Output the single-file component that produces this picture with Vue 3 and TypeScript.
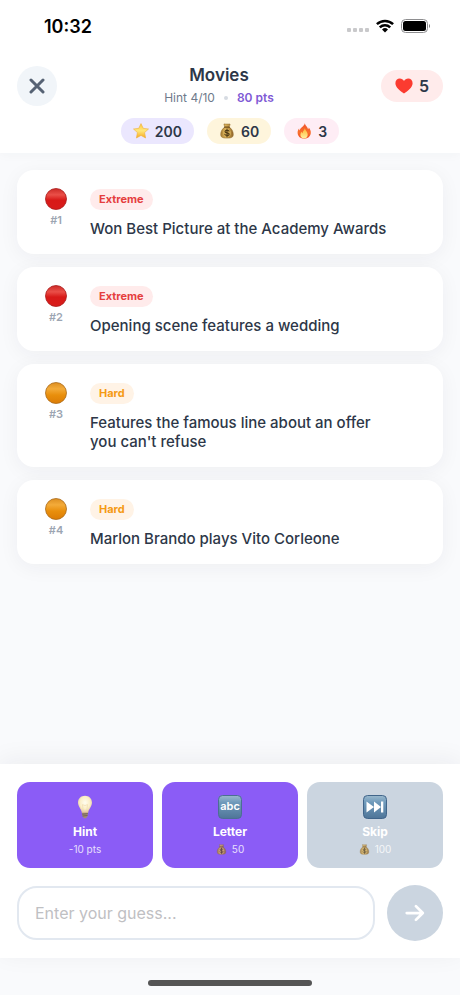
<script setup lang="ts">
import { computed, ref } from 'vue'

interface Hint {
  level: 'Extreme' | 'Hard'
  text: string
}

interface Stat {
  icon: string
  value: number
  tone: string
  label: string
}

interface Action {
  icon: string
  label: string
  cost: string
  coins: boolean
  disabled: boolean
}

const hints: Hint[] = [
  { level: 'Extreme', text: 'Won Best Picture at the Academy Awards' },
  { level: 'Extreme', text: 'Opening scene features a wedding' },
  { level: 'Hard', text: "Features the famous line about an offer you can't refuse" },
  { level: 'Hard', text: 'Marlon Brando plays Vito Corleone' },
]

const stats: Stat[] = [
  { icon: 'star', value: 200, tone: 'violet', label: 'Score' },
  { icon: 'bag', value: 60, tone: 'yellow', label: 'Coins' },
  { icon: 'fire', value: 3, tone: 'pink', label: 'Streak' },
]

const actions: Action[] = [
  { icon: 'bulb', label: 'Hint', cost: '-10 pts', coins: false, disabled: false },
  { icon: 'abc', label: 'Letter', cost: '50', coins: true, disabled: false },
  { icon: 'next', label: 'Skip', cost: '100', coins: true, disabled: true },
]

const guess = ref('')
const canSend = computed(() => guess.value.trim().length > 0)
</script>

<template>
  <div class="screen">
    <svg class="sprite" width="0" height="0" aria-hidden="true">
      <defs>
        <linearGradient id="g-star" x1="0" y1="0" x2="0" y2="1">
          <stop offset="0" stop-color="#ffc93c" />
          <stop offset="0.5" stop-color="#ffe77a" />
          <stop offset="1" stop-color="#f8a91f" />
        </linearGradient>
        <linearGradient id="g-red" x1="0" y1="0" x2="0" y2="1">
          <stop offset="0" stop-color="#cc2a26" />
          <stop offset="0.3" stop-color="#ea4f48" />
          <stop offset="0.55" stop-color="#d81a18" />
          <stop offset="1" stop-color="#d81c1b" />
        </linearGradient>
        <linearGradient id="g-orange" x1="0" y1="0" x2="0" y2="1">
          <stop offset="0" stop-color="#dd8e20" />
          <stop offset="0.3" stop-color="#f3ab3a" />
          <stop offset="0.6" stop-color="#e98f0c" />
          <stop offset="1" stop-color="#dc7c05" />
        </linearGradient>
        <linearGradient id="g-bag" x1="0" y1="0" x2="1" y2="0">
          <stop offset="0" stop-color="#a97e34" />
          <stop offset="0.4" stop-color="#d9b25c" />
          <stop offset="1" stop-color="#94692a" />
        </linearGradient>
        <linearGradient id="g-fire" x1="0" y1="0" x2="0" y2="1">
          <stop offset="0" stop-color="#f0512b" />
          <stop offset="0.6" stop-color="#f9702b" />
          <stop offset="1" stop-color="#ee4d24" />
        </linearGradient>
        <linearGradient id="g-flame" x1="0" y1="0" x2="0" y2="1">
          <stop offset="0" stop-color="#ffb52e" />
          <stop offset="1" stop-color="#fff0a0" />
        </linearGradient>
        <radialGradient id="g-bulb" cx="0.5" cy="0.4" r="0.6">
          <stop offset="0" stop-color="#fffdf0" />
          <stop offset="0.6" stop-color="#fbeec6" />
          <stop offset="1" stop-color="#dcbf9c" />
        </radialGradient>
        <linearGradient id="g-tile" x1="0" y1="0" x2="0" y2="1">
          <stop offset="0" stop-color="#9bb9cd" />
          <stop offset="0.3" stop-color="#6f9abb" />
          <stop offset="1" stop-color="#4f7598" />
        </linearGradient>
      </defs>
      <symbol id="star" viewBox="0 0 16 16">
        <path d="M8 .6l2.200 4.700 5.300.7-3.900 3.600 1 5.400L8 12.400 3.400 15l1-5.400L.5 6l5.300-.7z" fill="url(#g-star)" stroke="#efb040" stroke-width=".6" stroke-linejoin="round" />
      </symbol>
      <symbol id="bag" viewBox="0 0 16 16">
        <path d="M5 .9c1 .5 1.600-.2 3 .2 1.300-.4 2 .3 3-.1.4 1-.7 2-1 3.100 2.900 1.400 4.300 4.600 4.300 7.400 0 2.500-1.400 3.600-6.300 3.600s-6.300-1.100-6.300-3.600c0-2.800 1.400-6 4.300-7.400C5.700 3 4.700 1.900 5 .9z" fill="url(#g-bag)" stroke="#8a6429" stroke-width=".5" />
        <path d="M5.600 4.200h4.800" stroke="#6e4c1b" stroke-width="1.200" stroke-linecap="round" />
        <circle cx="8" cy="9.800" r="3.900" fill="#d5ad57" />
        <path d="M10 8.100C9.600 7.400 8.900 7.200 8 7.200c-1.200 0-2 .5-2 1.300 0 1.900 4.200.8 4.200 2.700 0 .8-.9 1.300-2.200 1.300-1.100 0-1.900-.4-2.200-1.100M8 6v7.700" fill="none" stroke="#4b3714" stroke-width="1.100" stroke-linecap="round" />
      </symbol>
      <symbol id="fire" viewBox="0 0 16 16">
        <path d="M8.800.3c.4 2.700 3 3.500 3.300 6 .5-.4.700-1 .600-1.700 1.500 1.700 2.300 3.500 2.100 5.400-.3 3.500-3 5.700-6.500 5.700-3.700 0-6.500-2.200-6.700-5.700-.1-1.800.4-3.200 1.500-4.600 0 .9.200 1.500.8 2C3.900 4.300 8.300 3.700 8.800.3z" fill="url(#g-fire)" />
        <path d="M8.800 5c.1 2 2.900 3.600 2.900 6.700 0 2.300-1.500 3.700-3.600 3.700s-3.700-1.400-3.700-3.500c0-1.500.8-2.500 1.300-3.200.1.900.4 1.300.9 1.600C6.500 8 8.600 7.400 8.800 5z" fill="url(#g-flame)" />
      </symbol>
      <symbol id="heart" viewBox="0 0 18 16">
        <path d="M9 15.600C5.300 13.100.4 9.600.4 5.300.4 2.600 2.300.6 4.800.6 6.600.6 8.200 1.500 9 3 9.800 1.500 11.400.6 13.200.6c2.500 0 4.400 2 4.400 4.700 0 4.300-4.900 7.800-8.600 10.300z" fill="#fb3b30" />
      </symbol>
      <symbol id="bulb" viewBox="0 0 24 24">
        <path d="M12 .8c4.200 0 7 2.900 7 6.800 0 4.100-3.300 6.300-3.900 10.400H8.900C8.300 13.900 5 11.700 5 7.600 5 3.700 7.800.8 12 .8z" fill="url(#g-bulb)" />
        <path d="M10.300 16.500L9.500 9.600l2.500 1 2.500-1-.8 6.900" fill="none" stroke="#efd9a8" stroke-width=".6" />
        <path d="M9 17.700h6l-.4 3.300-1.500 2.200h-2.200L9.400 21z" fill="#a28d77" />
        <path d="M9.200 19.200l5.600-.5M9.500 21l5-.5" stroke="#69594e" stroke-width=".8" />
      </symbol>
      <symbol id="tile" viewBox="0 0 24 24">
        <rect x=".5" y=".5" width="23" height="23" rx="4" fill="url(#g-tile)" stroke="#4b6f93" />
      </symbol>
      <symbol id="next" viewBox="0 0 24 24">
        <rect x=".5" y=".5" width="23" height="23" rx="4" fill="url(#g-tile)" stroke="#41658a" />
        <path d="M3.500 6.500l7.500 5.500-7.500 5.500zM11 6.500l7 5.500-7 5.500zM18 6.500h2.300v11H18z" fill="#fff" />
      </symbol>
      <symbol id="level-Extreme" viewBox="0 0 22 22">
        <circle cx="11" cy="11" r="10.500" fill="url(#g-red)" stroke="#a91c1c" stroke-width=".8" />
      </symbol>
      <symbol id="level-Hard" viewBox="0 0 22 22">
        <circle cx="11" cy="11" r="10.500" fill="url(#g-orange)" stroke="#a9691a" stroke-width=".8" />
      </symbol>
    </svg>

    <header class="header">
      <div class="status">
        <span class="clock">10:32</span>
        <div class="signals">
          <svg class="dots" viewBox="0 0 22 4" aria-hidden="true">
            <g fill="#c9c9cb"><rect width="4" height="4" rx="1" /><rect x="6" width="4" height="4" rx="1" /><rect x="12" width="4" height="4" rx="1" /><rect x="18" width="4" height="4" rx="1" /></g>
          </svg>
          <svg class="wifi" viewBox="0 0 18 14" aria-hidden="true">
            <g fill="none" stroke="#000" stroke-width="2.500">
              <path d="M.9 5.200a11.800 11.800 0 0 1 16.200 0" />
              <path d="M3.800 8.400a7.500 7.500 0 0 1 10.400 0" />
            </g>
            <path d="M9 13.600l-3-3.100a4.300 4.300 0 0 1 6 0z" />
          </svg>
          <svg class="battery" viewBox="0 0 30 14" aria-hidden="true">
            <rect x=".5" y=".5" width="26" height="13" rx="4" fill="none" stroke="#8e8e90" />
            <rect x="2" y="2" width="23" height="10" rx="2.500" />
            <path d="M28 5v4c1.300-.5 1.300-3.500 0-4z" fill="#777" />
          </svg>
        </div>
      </div>

      <div class="topbar">
        <button class="close" type="button" aria-label="Close">
          <svg viewBox="0 0 16 16" aria-hidden="true"><path d="M2 2l12 12M14 2L2 14" /></svg>
        </button>
        <div class="heading">
          <h1>Movies</h1>
          <p class="progress">
            <span>Hint 4/10</span>
            <i class="sep"></i>
            <strong>80 pts</strong>
          </p>
        </div>
        <div class="lives">
          <svg class="heart" aria-hidden="true"><use href="#heart" /></svg>
          <span>5</span>
        </div>
      </div>

      <ul class="stats">
        <li v-for="s in stats" :key="s.icon" class="stat" :class="s.tone" :aria-label="s.label">
          <svg class="stat-icon" aria-hidden="true"><use :href="'#' + s.icon" /></svg>
          <span>{{ s.value }}</span>
        </li>
      </ul>
    </header>

    <main class="hints">
      <article v-for="(h, i) in hints" :key="i" class="card">
        <div class="rank">
          <svg class="ball" aria-hidden="true"><use :href="'#level-' + h.level" /></svg>
          <span>#{{ i + 1 }}</span>
        </div>
        <div class="body">
          <span class="badge" :class="h.level.toLowerCase()">{{ h.level }}</span>
          <p class="text">{{ h.text }}</p>
        </div>
      </article>
    </main>

    <footer class="panel">
      <div class="actions">
        <button v-for="a in actions" :key="a.label" class="action" type="button" :disabled="a.disabled">
          <svg v-if="a.icon === 'abc'" class="action-icon" viewBox="0 0 24 24" aria-hidden="true">
            <use href="#tile" />
            <text class="abc" x="12" y="15" text-anchor="middle">abc</text>
          </svg>
          <svg v-else class="action-icon" aria-hidden="true"><use :href="'#' + a.icon" /></svg>
          <span class="action-label">{{ a.label }}</span>
          <span class="cost">
            <svg v-if="a.coins" class="coin" aria-hidden="true"><use href="#bag" /></svg>
            {{ a.cost }}
          </span>
        </button>
      </div>
      <form class="guess" @submit.prevent>
        <input v-model="guess" type="text" aria-label="Your guess" placeholder="Enter your guess..." />
        <button class="send" :class="{ ready: canSend }" type="submit" aria-label="Send guess">
          <svg viewBox="0 0 24 24" aria-hidden="true"><path d="M3 12h17M13 4.500l7.500 7.500-7.500 7.500" /></svg>
        </button>
      </form>
    </footer>
    <div class="home"><span></span></div>
  </div>
</template>

<style>
body {
  margin: 0;
  background: #f8fafc;
}
</style>

<style scoped>
* {
  box-sizing: border-box;
}

.screen {
  display: flex;
  flex-direction: column;
  min-height: 100vh;
  background: #f9fafc;
  color: #2d3748;
  font-family: Inter, "Liberation Sans", sans-serif;
}

.sprite {
  position: absolute;
}

svg {
  display: block;
  flex: none;
}

h1,
p,
ul {
  margin: 0;
  padding: 0;
}

button,
input {
  font: inherit;
}

button {
  display: flex;
  align-items: center;
  justify-content: center;
  padding: 0;
  border: 0;
}

.header {
  padding-bottom: 9px;
  background: #fff;
  box-shadow: 0 2px 10px rgba(45, 55, 72, 0.03);
}

.status {
  display: flex;
  align-items: center;
  justify-content: space-between;
  height: 54px;
  padding: 0 29px 2px 44px;
  color: #000;
}

.clock {
  font-size: 18px;
  font-weight: 600;
}

.signals {
  display: flex;
  align-items: center;
  gap: 7px;
}

.dots {
  width: 22px;
  height: 4px;
  margin-top: 8px;
}

.wifi {
  width: 18px;
  height: 14px;
}

.battery {
  width: 30px;
  height: 14px;
}

.topbar {
  display: flex;
  align-items: center;
  justify-content: space-between;
  height: 64px;
  padding: 0 17px;
}

.close {
  width: 40px;
  height: 40px;
  border-radius: 50%;
  background: #f1f5f9;
}

.close svg {
  width: 16px;
  height: 16px;
  fill: none;
  stroke: #566274;
  stroke-width: 3;
  stroke-linecap: round;
}

.heading {
  text-align: center;
}

h1 {
  font-size: 17px;
  font-weight: 600;
  line-height: 24px;
}

.progress {
  display: flex;
  align-items: center;
  justify-content: center;
  gap: 9px;
  color: #6f7a8b;
  font-size: 12px;
  line-height: 22px;
}

.progress strong {
  color: #805ad5;
  font-weight: 600;
}

.sep {
  width: 4px;
  height: 4px;
  border-radius: 50%;
  background: #d6dbe2;
}

.lives {
  display: flex;
  align-items: center;
  gap: 6px;
  height: 32px;
  padding: 0 14px;
  border-radius: 16px;
  background: #ffebeb;
  font-size: 16px;
  font-weight: 600;
}

.heart {
  width: 18px;
  height: 16px;
}

.stats {
  display: flex;
  justify-content: center;
  gap: 13px;
  list-style: none;
}

.stat {
  display: flex;
  align-items: center;
  gap: 6px;
  height: 26px;
  padding: 0 12px;
  border-radius: 13px;
  font-size: 14px;
  font-weight: 600;
}

.violet {
  background: #ebe7fe;
}

.yellow {
  background: #fef5dc;
}

.pink {
  background: #feedf5;
}

.stat-icon {
  width: 16px;
  height: 16px;
}

.hints {
  display: flex;
  flex: 1;
  flex-direction: column;
  gap: 13px;
  padding: 17px;
}

.card {
  display: flex;
  gap: 12px;
  padding: 18px 17px 16px;
  border-radius: 17px;
  background: #fff;
  box-shadow: 0 4px 20px rgba(30, 35, 50, 0.05);
}

.rank {
  display: flex;
  flex: none;
  flex-direction: column;
  align-items: center;
  gap: 3px;
  width: 44px;
  color: #9ca5b2;
  font-size: 11px;
  font-weight: 600;
  line-height: 14px;
}

.ball {
  width: 22px;
  height: 22px;
}

.body {
  display: flex;
  flex: 1;
  flex-direction: column;
  align-items: flex-start;
  gap: 9px;
  padding: 1px 34px 0 0;
}

.badge {
  padding: 0 9px;
  border-radius: 11px;
  font-size: 11px;
  font-weight: 700;
  line-height: 21px;
}

.extreme {
  background: #ffebeb;
  color: #e53e3e;
}

.hard {
  background: #fff3e6;
  color: #f59a14;
}

.text {
  font-size: 15px;
  font-weight: 500;
  line-height: 19px;
}

.panel {
  display: flex;
  flex-direction: column;
  gap: 17px;
  padding: 18px 17px 17px;
  background: #fff;
  box-shadow: 0 -4px 24px rgba(30, 35, 50, 0.06);
}

.actions {
  display: grid;
  grid-template-columns: repeat(3, 1fr);
  gap: 9px;
}

.action {
  flex-direction: column;
  height: 86px;
  padding-top: 3px;
  border-radius: 13px;
  background: #8b5cf6;
  color: #fff;
}

.action:disabled {
  background: #cbd5e0;
}

.action-icon {
  width: 24px;
  height: 24px;
  margin-bottom: 4px;
}

.abc {
  fill: #fff;
  font-size: 11px;
  font-weight: 600;
}

.action-label {
  font-size: 12px;
  font-weight: 700;
  line-height: 17px;
}

.cost {
  display: flex;
  align-items: center;
  gap: 5px;
  font-size: 10px;
  line-height: 19px;
  opacity: 0.8;
}

.coin {
  width: 11px;
  height: 11px;
}

.guess {
  display: flex;
  align-items: center;
  gap: 12px;
}

input {
  flex: 1;
  min-width: 0;
  height: 54px;
  padding: 0 16px;
  border: 2px solid #e2e8f0;
  border-radius: 20px;
  outline: none;
  background: #fff;
  color: #2d3748;
  font-size: 16px;
}

input::placeholder {
  color: #bfc0c3;
  opacity: 1;
}

.send {
  width: 56px;
  height: 56px;
  border-radius: 50%;
  background: #cbd5e0;
}

.send.ready {
  background: #8b5cf6;
}

.send svg {
  width: 22px;
  height: 22px;
  fill: none;
  stroke: #fff;
  stroke-width: 3;
  stroke-linecap: round;
  stroke-linejoin: round;
}

.home {
  display: flex;
  justify-content: center;
  height: 37px;
  padding-top: 22px;
}

.home span {
  width: 164px;
  height: 6px;
  border-radius: 3px;
  background: #555;
}
</style>
